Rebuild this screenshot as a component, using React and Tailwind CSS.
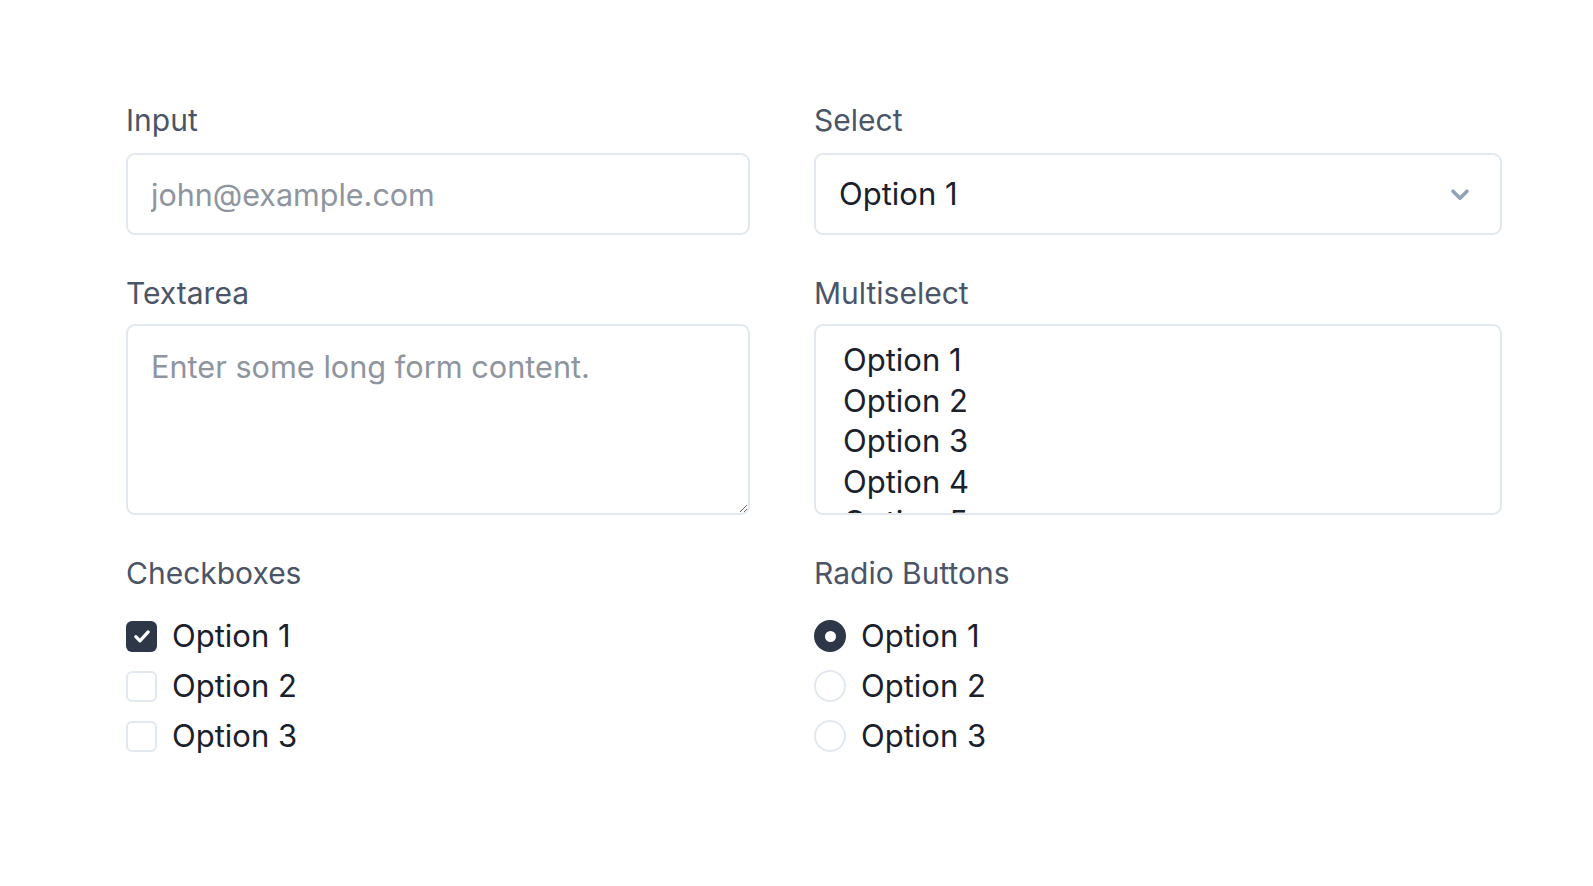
import React from "react";

const font = { fontFamily: "Inter, 'Noto Sans', sans-serif" };

const Label = ({ children, className = "" }) => (
  <div className={`text-[30px] leading-[36px] text-[#4a5568] ${className}`}>{children}</div>
);

const Check = () => (
  <svg viewBox="0 0 16 16" className="w-[22px] h-[22px]" fill="none">
    <path d="M3.5 8.5l3 3 6-6.5" stroke="white" strokeWidth="2.4" strokeLinecap="round" strokeLinejoin="round" />
  </svg>
);

const options = ["Option 1", "Option 2", "Option 3"];

export default function App() {
  return (
    <div style={font} className="min-h-screen bg-white pt-[102px] pl-[126px]">
      <div className="grid grid-cols-[624px_688px] gap-x-[64px] gap-y-[40px]">
        <div>
          <Label className="mb-[15px]">Input</Label>
          <input
            type="text"
            placeholder="john@example.com"
            className="w-full h-[82px] border-2 border-[#e2e8f0] rounded-[9px] px-[23px] text-[30.5px] text-[#1a202c] placeholder:text-[#8f959e] outline-none"
          />
        </div>
        <div>
          <Label className="mb-[15px]">Select</Label>
          <div className="w-full h-[82px] border-2 border-[#e2e8f0] rounded-[9px] pl-[23px] pr-[26px] flex items-center justify-between text-[31px] text-[#1a202c]">
            <span>Option 1</span>
            <svg viewBox="0 0 20 20" className="w-[28px] h-[28px]" fill="none">
              <path d="M5 8l5 5 5-5" stroke="#94a3b8" strokeWidth="2.6" strokeLinecap="round" strokeLinejoin="round" />
            </svg>
          </div>
        </div>

        <div>
          <Label className="mb-[13px]">Textarea</Label>
          <textarea
            placeholder="Enter some long form content."
            className="block w-full h-[191px] border-2 border-[#e2e8f0] rounded-[9px] px-[23px] pt-[21px] pb-[18px] text-[30.7px] leading-[40px] text-[#1a202c] placeholder:text-[#8f959e] outline-none"
          />
        </div>
        <div>
          <Label className="mb-[13px]">Multiselect</Label>
          <div className="w-full h-[191px] border-2 border-[#e2e8f0] rounded-[9px] pl-[27px] pt-[14px] overflow-hidden text-[31px] leading-[40.5px] text-[#1a202c]">
            {["Option 1", "Option 2", "Option 3", "Option 4", "Option 5"].map((o) => (
              <div key={o}>{o}</div>
            ))}
          </div>
        </div>

        <div>
          <Label className="mb-[20px]">Checkboxes</Label>
          {options.map((o, i) => (
            <label key={o} className="flex items-center gap-[15px] h-[50px]">
              {i === 0 ? (
                <span className="w-[31px] h-[31px] rounded-[6px] bg-[#2d3748] flex items-center justify-center">
                  <Check />
                </span>
              ) : (
                <span className="w-[31px] h-[31px] rounded-[6px] border-2 border-[#e2e8f0] bg-white" />
              )}
              <span className="text-[31px] text-[#1a202c]">{o}</span>
            </label>
          ))}
        </div>
        <div>
          <Label className="mb-[20px]">Radio Buttons</Label>
          {options.map((o, i) => (
            <label key={o} className="flex items-center gap-[15px] h-[50px]">
              {i === 0 ? (
                <span className="w-[32px] h-[32px] rounded-full bg-[#2d3748] flex items-center justify-center">
                  <span className="w-[11px] h-[11px] rounded-full bg-white" />
                </span>
              ) : (
                <span className="w-[32px] h-[32px] rounded-full border-2 border-[#e2e8f0] bg-white" />
              )}
              <span className="text-[31px] text-[#1a202c]">{o}</span>
            </label>
          ))}
        </div>
      </div>
    </div>
  );
}
